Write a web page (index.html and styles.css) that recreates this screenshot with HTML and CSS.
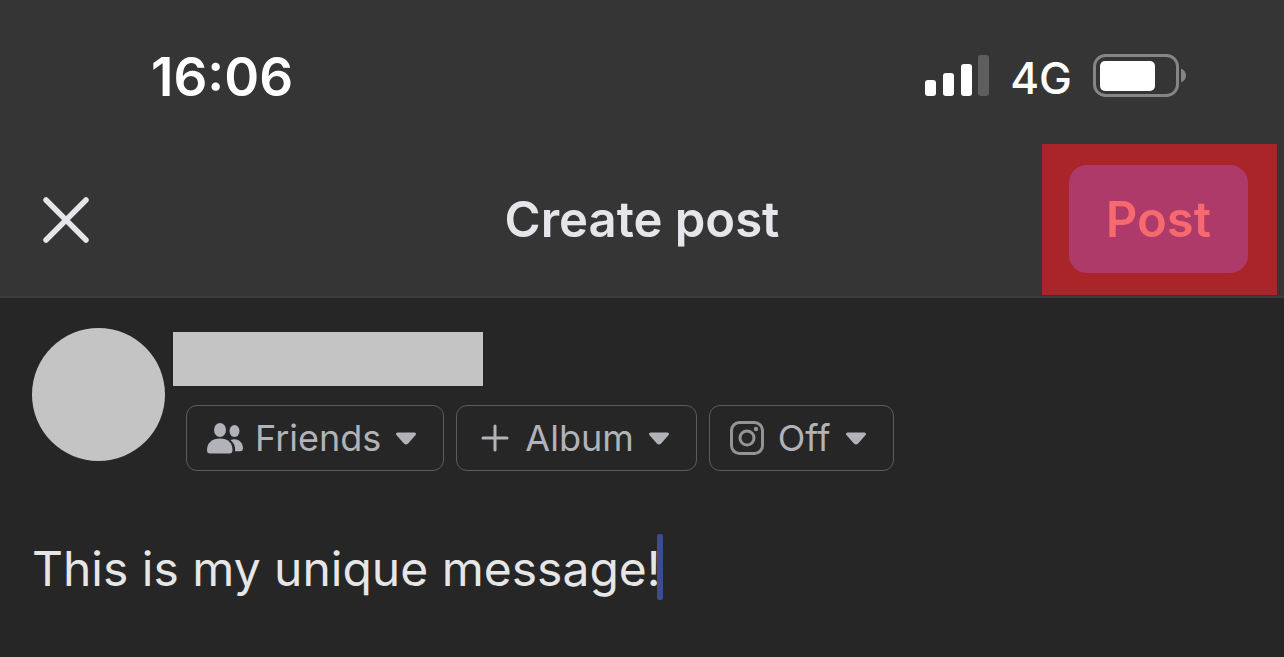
FILE: index.html
```html
<!DOCTYPE html>
<html lang="en">
  <head>
    <meta charset="UTF-8" />
    <meta name="viewport" content="width=device-width, initial-scale=1.0" />
    <title>Create post</title>
    <link rel="stylesheet" href="styles.css">
  </head>
  <body>
    <div class="top">
      <!-- status bar -->
      <div class="status-bar">
        <span class="time">16:06</span>
        <div class="status-icons">
          <svg class="signal" width="65" height="44" viewBox="0 0 65 44">
            <rect x="1" y="25" width="11" height="16" rx="3" fill="#fff" />
            <rect x="19" y="18" width="11" height="23" rx="3" fill="#fff" />
            <rect x="37" y="9" width="11" height="32" rx="3" fill="#fff" />
            <rect x="54" y="0" width="11" height="41" rx="3" fill="#5e5e5f" />
          </svg>
          <span class="network">4G</span>
          <svg class="battery" width="94" height="46" viewBox="0 0 94 46">
            <rect x="1.500" y="1.500" width="83" height="40" rx="11" fill="none" stroke="#858586" stroke-width="3" />
            <rect x="7" y="7" width="55" height="30" rx="5" fill="#fff" />
            <path d="M88 14.500c3 1.200 5 4 5 7s-2 5.800-5 7z" fill="#858586" />
          </svg>
        </div>
      </div>

      <!-- title row -->
      <header class="header">
        <button class="close" type="button" aria-label="Close">
          <svg width="46" height="46" viewBox="0 0 46 46">
            <path d="M3 3l40 40M43 3L3 43" fill="none" stroke="#e6e5ea" stroke-width="5.500" stroke-linecap="round" />
          </svg>
        </button>
        <h1 class="title">Create post</h1>
        <div class="highlight">
          <button class="post" type="submit" form="composer">Post</button>
        </div>
      </header>
    </div>

    <form class="composer" id="composer">
      <div class="author">
        <div class="avatar"></div>
        <div class="author-info">
          <div class="name"></div>
          <div class="chips">
            <button class="chip" type="button" aria-haspopup="true">
              <svg class="chip-icon" width="36" height="31" viewBox="0 0 36 31" fill="#b1b3b8">
                <ellipse cx="13" cy="7" rx="6" ry="7" />
                <ellipse cx="27.500" cy="8" rx="5" ry="6" />
                <path d="M0 27c0-7 5-11.500 13-11.500S25.500 20 25.500 27c0 2.500-1 3.500-3 3.500H3c-2 0-3-1-3-3.500z" />
                <path d="M23.500 17c1-.5 2.500-.7 4-.7 5 0 8.500 4 8.500 9 0 2-1 3-3 3h-5c.6-4.500-.8-8.300-4.500-11.300z" />
              </svg>
              Friends
              <svg class="caret" width="22" height="15" viewBox="0 0 22 15">
                <path d="M2.500 3h17L12 11.500q-1 1-2 0z" fill="#b1b3b8" stroke="#b1b3b8" stroke-width="3" stroke-linejoin="round" />
              </svg>
            </button>
            <button class="chip" type="button" aria-haspopup="true">
              <svg class="chip-icon" width="36" height="28" viewBox="0 0 36 28">
                <path d="M18 2v24M6 14h24" fill="none" stroke="#b1b3b8" stroke-width="3" stroke-linecap="round" />
              </svg>
              Album
              <svg class="caret" width="22" height="15" viewBox="0 0 22 15">
                <path d="M2.500 3h17L12 11.500q-1 1-2 0z" fill="#b1b3b8" stroke="#b1b3b8" stroke-width="3" stroke-linejoin="round" />
              </svg>
            </button>
            <button class="chip" type="button" aria-haspopup="true">
              <svg class="chip-icon" width="36" height="34" viewBox="0 0 36 34" fill="none" stroke="#949496" stroke-width="3">
                <rect x="1.500" y="1.500" width="31" height="31" rx="8" />
                <circle cx="17" cy="17" r="7" />
                <circle cx="26" cy="8" r="2.200" fill="#949496" stroke="none" />
              </svg>
              Off
              <svg class="caret" width="22" height="15" viewBox="0 0 22 15">
                <path d="M2.500 3h17L12 11.500q-1 1-2 0z" fill="#b1b3b8" stroke="#b1b3b8" stroke-width="3" stroke-linejoin="round" />
              </svg>
            </button>
          </div>
        </div>
      </div>

      <div class="message-row">
        <input class="message" type="text" aria-label="Message" value="This is my unique message!" />
        <span class="cursor"></span>
      </div>
    </form>
  </body>
</html>
```
FILE: styles.css
```css
* {
  box-sizing: border-box;
}
body {
  margin: 0;
  background-color: #262626;
  color: #e6e5ea;
  font-family: Inter, "Liberation Sans", sans-serif;
}
button {
  font-family: inherit;
  border: none;
  background: none;
  padding: 0;
  cursor: pointer;
}
svg {
  display: block;
  flex-shrink: 0;
}
.top {
  background-color: #353536;
  border-bottom: 2px solid #3e3e3f;
}
.status-bar {
  display: flex;
  justify-content: space-between;
  align-items: center;
  height: 144px;
  padding: 10px 97px 0 151px;
  color: #fff;
}
.time {
  font-size: 53px;
  font-weight: 600;
}
.status-icons {
  display: flex;
  align-items: center;
  gap: 21px;
}
.network {
  padding-top: 2px;
  font-size: 44px;
  font-weight: 500;
}
.header {
  display: grid;
  grid-template-columns: 1fr auto 1fr;
  align-items: center;
  padding-bottom: 1px;
}
.close {
  justify-self: start;
  margin-left: 43px;
}
.title {
  margin: 0;
  font-size: 49px;
  font-weight: 600;
}
.highlight {
  justify-self: end;
  margin-right: 7px;
  padding: 21px 29px 22px 27px;
  background-color: #a9252a;
}
.post {
  display: block;
  height: 108px;
  padding: 0 37px;
  border-radius: 18px;
  background-color: #ad3a68;
  color: #f6696f;
  font-size: 49px;
  font-weight: 600;
}
.composer {
  padding: 30px 32px;
}
.author {
  display: flex;
  gap: 8px;
}
.avatar {
  width: 133px;
  height: 133px;
  border-radius: 50%;
  background-color: #c4c4c4;
  flex-shrink: 0;
}
.author-info {
  padding-top: 4px;
}
.name {
  width: 310px;
  height: 54px;
  background-color: #c4c4c4;
}
.chips {
  display: flex;
  gap: 12px;
  margin: 19px 0 0 13px;
}
.chip {
  display: flex;
  align-items: center;
  gap: 12px;
  height: 66px;
  padding: 0 26px 0 20px;
  border: 1px solid #5c5c5d;
  border-radius: 11px;
  color: #b1b3b8;
  font-size: 36px;
}
.caret {
  margin-left: 2px;
}
.message-row {
  display: flex;
  align-items: center;
  margin-top: 63px;
}
.message {
  field-sizing: content;
  max-width: 100%;
  padding: 3px 0 0;
  border: none;
  outline: none;
  background: none;
  color: #e6e6e6;
  font-family: inherit;
  font-size: 48px;
}
.cursor {
  width: 6px;
  height: 66px;
  margin-left: -4px;
  border-radius: 2px;
  background-color: #3d4b8f;
}
```
